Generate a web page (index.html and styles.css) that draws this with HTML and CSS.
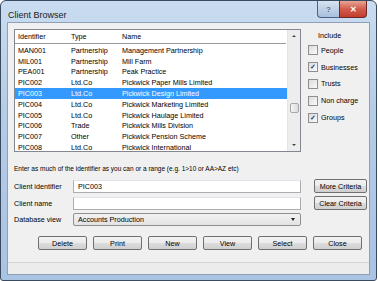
FILE: index.html
```html
<!DOCTYPE html>
<html>
<head>
    <title>Client Browser</title>
    <link rel="stylesheet" href="styles.css">
</head>
<body>
    <div class="window">
        <div class="titlebar">
            <span class="title">Client Browser</span>
            <div class="caption-buttons">
                <span class="cap-btn help">?</span>
                <span class="cap-btn close">&#x2715;</span>
            </div>
        </div>

        <div class="client">
            <div class="top-row">
                <div class="listbox">
                    <div class="list-main">
                        <div class="list-header">
                            <span class="col-id">Identifier</span>
                            <span class="col-type">Type</span>
                            <span class="col-name">Name</span>
                        </div>
                        <div class="list-rows">
                            <div class="row"><span class="col-id">MAN001</span><span class="col-type">Partnership</span><span class="col-name">Management Partnership</span></div>
                            <div class="row"><span class="col-id">MIL001</span><span class="col-type">Partnership</span><span class="col-name">Mill Farm</span></div>
                            <div class="row"><span class="col-id">PEA001</span><span class="col-type">Partnership</span><span class="col-name">Peak Practice</span></div>
                            <div class="row"><span class="col-id">PIC002</span><span class="col-type">Ltd.Co</span><span class="col-name">Pickwick Paper Mills Limited</span></div>
                            <div class="row selected"><span class="col-id">PIC003</span><span class="col-type">Ltd.Co</span><span class="col-name">Pickwick Design Limited</span></div>
                            <div class="row"><span class="col-id">PIC004</span><span class="col-type">Ltd.Co</span><span class="col-name">Pickwick Marketing Limited</span></div>
                            <div class="row"><span class="col-id">PIC005</span><span class="col-type">Ltd.Co</span><span class="col-name">Pickwick Haulage Limited</span></div>
                            <div class="row"><span class="col-id">PIC006</span><span class="col-type">Trade</span><span class="col-name">Pickwick Mills Division</span></div>
                            <div class="row"><span class="col-id">PIC007</span><span class="col-type">Other</span><span class="col-name">Pickwick Pension Scheme</span></div>
                            <div class="row"><span class="col-id">PIC008</span><span class="col-type">Ltd.Co</span><span class="col-name">Pickwick International</span></div>
                        </div>
                    </div>
                    <div class="scrollbar">
                        <span class="arrow up"></span>
                        <span class="thumb"></span>
                        <span class="arrow down"></span>
                    </div>
                </div>

                <div class="include">
                    <div class="include-title">Include</div>
                    <label class="check"><span class="box"></span>People</label>
                    <label class="check"><span class="box checked">&#x2713;</span>Businesses</label>
                    <label class="check"><span class="box"></span>Trusts</label>
                    <label class="check"><span class="box"></span>Non charge</label>
                    <label class="check"><span class="box checked">&#x2713;</span>Groups</label>
                </div>
            </div>

            <div class="hint">Enter as much of the identifier as you can or a range (e.g. 1&gt;10 or AA&gt;AZ etc)</div>

            <div class="criteria">
                <span class="field-label">Client identifier</span>
                <div class="textbox">PIC003</div>
                <button class="btn small">More Criteria</button>

                <span class="field-label">Client name</span>
                <div class="textbox"></div>
                <button class="btn small">Clear Criteria</button>

                <span class="field-label">Database view</span>
                <div class="textbox combo">Accounts Production<span class="combo-arrow"></span></div>
            </div>

            <div class="actions">
                <button class="btn">Delete</button>
                <button class="btn">Print</button>
                <button class="btn">New</button>
                <button class="btn">View</button>
                <button class="btn">Select</button>
                <button class="btn">Close</button>
            </div>

            <div class="status-strip"></div>
        </div>
    </div>
</body>
</html>
```

FILE: styles.css
```css
body {
    margin: 0;
    background-color: #fff;
    font-family: "Liberation Sans", Arial, sans-serif;
}
.window {
    width: 375px;
    height: 279px;
    border: 1px solid #3b4b5f;
    border-radius: 6px 6px 3px 3px;
    background: linear-gradient(#c9dcf1, #b5cce7 40%, #a9c3e3);
    display: flex;
    flex-direction: column;
}
.titlebar {
    height: 20px;
    display: flex;
    justify-content: space-between;
    align-items: flex-start;
}
.title {
    font-size: 9px;
    color: #1b1b1b;
    padding: 9px 0 0 7px;
}
.caption-buttons {
    display: flex;
    margin-right: 9px;
}
.cap-btn {
    height: 16px;
    display: flex;
    align-items: center;
    justify-content: center;
    color: #fff;
    font-size: 8px;
    font-weight: bold;
    border: 1px solid #4c6283;
    border-top: none;
}
.help {
    width: 21px;
    background: linear-gradient(#d6e3f1, #a9bfdc);
    border-radius: 0 0 0 4px;
    border-right: none;
    color: #4a5d78;
    text-shadow: 0 0 1px #fff;
}
.close {
    width: 26px;
    background: linear-gradient(#e8a595, #d25c4c 50%, #c23d2e);
    border-color: #6b2a26;
    border-radius: 0 0 4px 0;
}
.client {
    margin: 1px 6px 0 6px;
    height: 251px;
    background-color: #f0f0f0;
    border: 1px solid #8e9fb6;
    display: flex;
    flex-direction: column;
    font-size: 7.2px;
    color: #000;
}
.top-row {
    display: flex;
    height: 123px;
    margin: 6px 0 0 6px;
}
.listbox {
    width: 285px;
    border: 1px solid #828790;
    background-color: #fff;
    display: flex;
    overflow: hidden;
}
.list-main {
    flex: 1;
    overflow: hidden;
}
.list-header {
    height: 13px;
    display: flex;
    align-items: center;
    border-bottom: 1px solid #9a9a9a;
    margin-right: 1px;
}
.list-rows {
    padding-top: 1px;
}
.row {
    height: 10.8px;
    display: flex;
    align-items: center;
}
.row.selected {
    background-color: #3399ff;
    color: #fff;
}
.col-id {
    width: 53px;
    padding-left: 3px;
}
.col-type {
    width: 51px;
}
.col-name {
    white-space: nowrap;
}
.scrollbar {
    width: 12px;
    background-color: #ededed;
    border-left: 1px solid #e4e4e4;
    display: flex;
    flex-direction: column;
    align-items: center;
}
.arrow {
    width: 0;
    height: 0;
    border-left: 2px solid transparent;
    border-right: 2px solid transparent;
}
.arrow.up {
    border-bottom: 2px solid #444;
    margin-top: 5px;
}
.arrow.down {
    border-top: 2px solid #444;
    margin-top: auto;
    margin-bottom: 5px;
}
.thumb {
    width: 9px;
    height: 10px;
    margin-top: 66px;
    border: 1px solid #a7a7a7;
    border-radius: 2px;
    background: linear-gradient(90deg, #f4f4f4, #dcdcdc);
    box-sizing: border-box;
}
.include {
    display: flex;
    flex-direction: column;
    padding-left: 7px;
}
.include-title {
    padding: 2px 0 0 10px;
    height: 11px;
}
.check {
    display: flex;
    align-items: center;
    height: 16.8px;
}
.box {
    width: 8px;
    height: 8px;
    border: 1px solid #8f8f8f;
    background: linear-gradient(135deg, #dcdcdc, #fafafa);
    margin-right: 3px;
    display: flex;
    align-items: center;
    justify-content: center;
    font-size: 7px;
    color: #21398a;
    font-weight: bold;
}
.hint {
    margin: 13px 0 0 6px;
    height: 10px;
    font-size: 6.5px;
}
.criteria {
    display: grid;
    grid-template-columns: 59px 228px 53px;
    row-gap: 3px;
    margin: 4px 0 0 6px;
    align-items: center;
}
.field-label {
    white-space: nowrap;
}
.textbox {
    height: 13px;
    box-sizing: border-box;
    border: 1px solid #abadb3;
    border-top-color: #e2e3ea;
    background-color: #fff;
    padding: 0 0 0 4px;
    display: flex;
    align-items: center;
}
.textbox.combo {
    background: linear-gradient(#f2f2f2, #e3e3e3);
    border-color: #8e8f8f;
    border-radius: 2px;
    justify-content: space-between;
    padding-right: 5px;
}
.combo-arrow {
    width: 0;
    height: 0;
    border-left: 2px solid transparent;
    border-right: 2px solid transparent;
    border-top: 3px solid #222;
}
.btn {
    height: 14px;
    box-sizing: border-box;
    border: 1px solid #707070;
    border-radius: 2px;
    background: linear-gradient(#f2f2f2, #ebebeb 50%, #dddddd 51%, #cfcfcf);
    font-family: "Liberation Sans", Arial, sans-serif;
    font-size: 7.2px;
    color: #000;
    padding: 0;
}
.btn.small {
    margin-left: 13px;
    width: 53px;
}
.actions {
    display: flex;
    justify-content: flex-end;
    gap: 6px;
    margin: 10px 7px 0 0;
}
.actions .btn {
    width: 49px;
}
.status-strip {
    margin-top: auto;
    height: 11px;
    border-top: 1px solid #d4d4d4;
    background-color: #ececec;
}
```
